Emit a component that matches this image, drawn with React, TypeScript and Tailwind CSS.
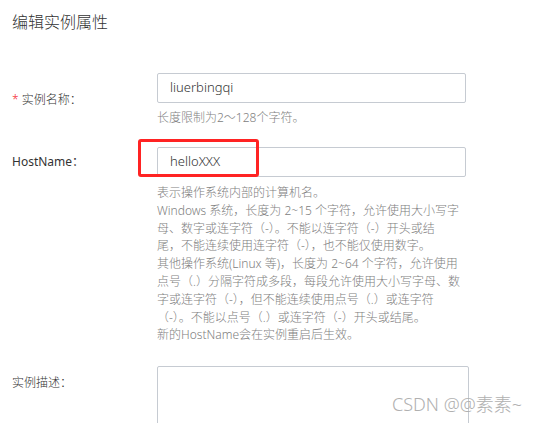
export default function App() {
  const hostHelp = [
    "表示操作系统内部的计算机名。",
    "Windows 系统，长度为 2~15 个字符，允许使用大小写字",
    "母、数字或连字符（-）。不能以连字符（-）开头或结",
    "尾，不能连续使用连字符（-），也不能仅使用数字。",
    "其他操作系统(Linux 等)，长度为 2~64 个字符，允许使用",
    "点号（.）分隔字符成多段，每段允许使用大小写字母、数",
    "字或连字符（-），但不能连续使用点号（.）或连字符",
    "（-）。不能以点号（.）或连字符（-）开头或结尾。",
    "新的HostName会在实例重启后生效。",
  ]

  return (
    <div className="relative w-[546px] h-[423px] overflow-hidden bg-white font-['Noto_Sans','Noto_Sans_CJK_SC',sans-serif] font-light text-[#333]">
      {/* 标题 */}
      <div className="pl-3 pt-[10px] text-[16px] leading-[24px] text-[#333]">编辑实例属性</div>

      {/* 实例名称 */}
      <div className="mt-[39px] flex">
        <div className="w-[157px] pl-3 flex items-center text-[12px] text-[#333]">
          <span className="text-[#f5222d] mr-[3px]">*</span>
          <span>实例名称：</span>
        </div>
        <div className="w-[309px]">
          <div className="h-[30px] border border-[#c6cbd2] rounded-[2px] pl-3 flex items-center text-[13px] text-[#333]">
            liuerbingqi
          </div>
          <div className="mt-[6px] text-[12px] leading-[18px] text-[#808080]">长度限制为2～128个字符。</div>
        </div>
      </div>

      {/* HostName */}
      <div className="mt-[20px] flex">
        <div className="w-[157px] pl-3 h-[30px] flex items-center text-[12px] font-normal text-[#333]">HostName：</div>
        <div className="w-[309px]">
          <div className="relative">
            <div className="h-[30px] border border-[#c6cbd2] rounded-[2px] pl-3 flex items-center text-[13px] text-[#333]">
              helloXXX
            </div>
            {/* 标注框 */}
            <div className="absolute left-[-19px] top-[-8px] w-[121px] h-[38px] border-[3px] border-[#ff2323] rounded-[3px]"></div>
          </div>
          <div className="mt-[7px] text-[12px] leading-[17.8px] text-[#808080] whitespace-nowrap">
            {hostHelp.map((line, i) => (
              <div key={i}>{line}</div>
            ))}
          </div>
        </div>
      </div>

      {/* 实例描述 */}
      <div className="mt-[22px] flex">
        <div className="w-[157px] pl-3 pt-[8px] text-[12px] leading-[18px] text-[#333]">实例描述：</div>
        <div className="w-[312px] h-[100px] border border-[#c6cbd2] rounded-[2px]"></div>
      </div>

      {/* 水印 */}
      <div className="absolute left-[392px] top-[392px] text-[18px] leading-[24px] font-light text-[#b0b0b0] whitespace-nowrap">
        CSDN @@素素~
      </div>
    </div>
  )
}
